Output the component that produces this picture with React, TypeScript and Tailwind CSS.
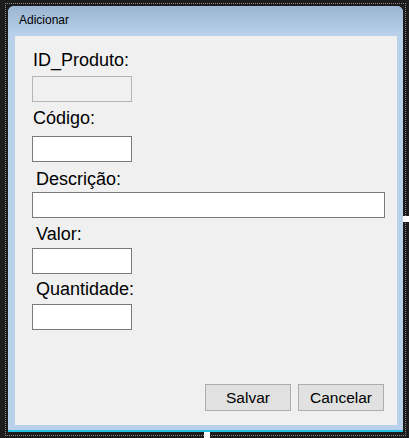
function Field({
  label,
  labelClass,
  boxClass,
  disabled,
}: {
  label: string;
  labelClass: string;
  boxClass: string;
  disabled?: boolean;
}) {
  return (
    <>
      <div className={`h-[21px] leading-[21px] text-[18px] text-black ${labelClass}`}>{label}</div>
      <div
        className={`h-[26px] border ${
          disabled ? "bg-[#f0f0f0] border-[#b4b4b4]" : "bg-white border-[#7a7a7a]"
        } ${boxClass}`}
      />
    </>
  );
}

export default function App() {
  return (
    <div
      className="relative w-[409px] h-[438px] bg-[#1c1c1c] pl-[5px] pt-[3px] overflow-hidden"
      style={{ fontFamily: '"Liberation Sans", Arial, sans-serif' }}
    >
      <div className="w-[401px] h-[433px] border border-dotted border-[#8a8a8a] pl-[2px] pt-[2px]">
        <div className="flex flex-col w-[395px] h-[426px] rounded-t-[6px] bg-[#b9d1ea] border-b-2 border-[#25c3e3] overflow-hidden">
          <div className="h-[30px] shrink-0 flex items-center pl-[11px] pb-[2px] bg-gradient-to-b from-[#9ab5d2] to-[#bad2eb] text-[12px] text-black">
            Adicionar
          </div>
          <div className="flex-1 ml-[7px] mr-[6px] mb-[5px] bg-[#f0f0f0] flex flex-col pl-[17px] pt-[14px]">
            <Field label="ID_Produto:" labelClass="ml-[1px]" boxClass="w-[100px] mt-[5px]" disabled />
            <Field label="Código:" labelClass="mt-[6px] ml-[1px]" boxClass="w-[100px] mt-[7px]" />
            <Field label="Descrição:" labelClass="mt-[7px] ml-[4px]" boxClass="w-[353px] mt-[2px]" />
            <Field label="Valor:" labelClass="mt-[6px] ml-[4px]" boxClass="w-[100px] mt-[3px]" />
            <Field label="Quantidade:" labelClass="mt-[5px] ml-[4px]" boxClass="w-[100px] mt-[4px]" />
            <div className="mt-auto flex justify-end gap-[7px] pr-[13px] pb-[14px]">
              <button className="w-[86px] h-[27px] bg-[#e1e1e1] border border-[#adadad] text-[15.5px] text-black">
                Salvar
              </button>
              <button className="w-[86px] h-[27px] bg-[#e1e1e1] border border-[#adadad] text-[15.5px] text-black">
                Cancelar
              </button>
            </div>
          </div>
        </div>
      </div>
      <div className="absolute left-[403px] top-[216px] w-[6px] h-[6px] bg-white" />
      <div className="absolute left-[204px] top-[432px] w-[6px] h-[6px] bg-white" />
    </div>
  );
}
